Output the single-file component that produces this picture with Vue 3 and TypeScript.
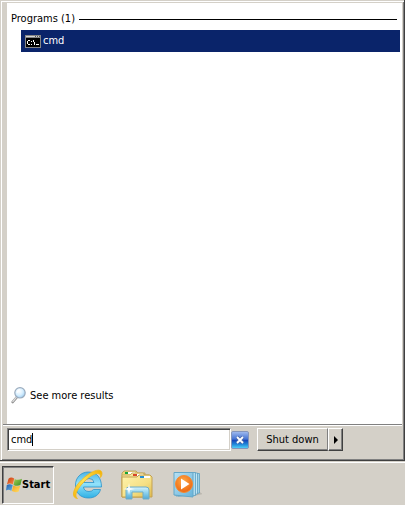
<script setup lang="ts">
import { ref } from 'vue'

interface Program {
  id: number
  name: string
}

const query = ref('cmd')
const programs = ref<Program[]>([{ id: 1, name: 'cmd' }])
const menuOpen = ref(true)

function clearQuery(): void {
  query.value = ''
}
</script>

<template>
  <div class="desktop">
    <main v-show="menuOpen" class="menu">
      <section class="results">
        <div class="heading">
          <h2>Programs ({{ programs.length }})</h2>
          <span class="rule"></span>
        </div>
        <ul class="list">
          <li v-for="program in programs" :key="program.id">
            <a class="program" href="#">
              <svg width="16" height="13" viewBox="0 0 16 13" shape-rendering="crispEdges" aria-hidden="true">
                <rect width="16" height="13" fill="#858585" />
                <rect x="1" y="1" width="14" height="1" fill="#d6d6d6" />
                <path d="M10 1h1v1h-1zM12 1h1v1h-1zM14 1h1v1h-1z" fill="#555" />
                <rect x="1" y="3" width="14" height="9" fill="#000" />
                <path d="M3 5h2v1H3zM2 6h1v3H2zM3 9h2v1H3zM6 6h1v1H6zM6 9h1v1H6zM8 5h1v2H8zM9 7h1v3H9zM11 9h3v1h-3z" fill="#fff" />
              </svg>
              <span>{{ program.name }}</span>
            </a>
          </li>
        </ul>
        <a class="more" href="#">
          <svg width="16" height="18" viewBox="0 0 16 18" aria-hidden="true">
            <defs>
              <radialGradient id="lens" cx=".4" cy=".35" r=".75">
                <stop offset="0" stop-color="#fff" />
                <stop offset=".5" stop-color="#d7efff" />
                <stop offset="1" stop-color="#8fc4ec" />
              </radialGradient>
            </defs>
            <path d="M6 10L1.700 15" stroke="#8c8c8c" stroke-width="2.600" stroke-linecap="round" />
            <path d="M5.700 10L1.800 14.500" stroke="#ddd" stroke-width="1.200" stroke-linecap="round" />
            <circle cx="9" cy="5.800" r="5.200" fill="url(#lens)" stroke="#9babbd" stroke-width="1.200" />
            <path d="M6 6Q6 3 9 2.500" fill="none" stroke="#fff" />
          </svg>
          <span>See more results</span>
        </a>
      </section>

      <form class="searchbar" @submit.prevent>
        <div class="field">
          <input v-model="query" type="text" aria-label="Search" autocomplete="off" spellcheck="false" />
          <span class="caret"></span>
        </div>
        <button class="clear" type="button" aria-label="Clear" @click="clearQuery">
          <svg width="18" height="18" viewBox="0 0 18 18" aria-hidden="true">
            <defs>
              <linearGradient id="blue" x2="0" y2="1">
                <stop offset="0" stop-color="#a3bdf0" />
                <stop offset=".45" stop-color="#4472d2" />
                <stop offset=".52" stop-color="#1745b7" />
                <stop offset=".75" stop-color="#2087d9" />
                <stop offset="1" stop-color="#55d6fa" />
              </linearGradient>
            </defs>
            <rect x=".5" y=".5" width="17" height="17" rx="1.500" fill="url(#blue)" stroke="#8495bb" />
            <path d="M6 6L12 12M12 6L6 12" stroke="#4a69ab" stroke-width="3.600" />
            <path d="M6 6L12 12M12 6L6 12" stroke="#fff" stroke-width="1.800" />
          </svg>
        </button>
        <div class="power">
          <button class="shutdown" type="button">Shut down</button>
          <button class="arrow" type="button" aria-label="More options">
            <svg width="4" height="8" viewBox="0 0 4 8" aria-hidden="true"><path d="M0 0L4 4L0 8z" /></svg>
          </button>
        </div>
      </form>
    </main>

    <nav class="taskbar">
      <button class="start" type="button" @click="menuOpen = !menuOpen">
        <svg width="16" height="16" viewBox="0 0 16 16" aria-hidden="true">
          <defs>
            <linearGradient id="flagRed" x2="1" y2="1"><stop stop-color="#c9390f" /><stop offset="1" stop-color="#f88d48" /></linearGradient>
            <linearGradient id="flagGreen" x2="1" y2="1"><stop stop-color="#a6d253" /><stop offset="1" stop-color="#358b23" /></linearGradient>
            <linearGradient id="flagBlue" x2="1" y2="1"><stop stop-color="#2159a8" /><stop offset="1" stop-color="#65b8eb" /></linearGradient>
            <linearGradient id="flagGold" x2="1" y2="1"><stop stop-color="#f2a019" /><stop offset="1" stop-color="#ffe06b" /></linearGradient>
          </defs>
          <path d="M2.500 1.800Q5-.5 8.200 1.600L6.900 7.500Q4 5.800 1 7.300z" fill="url(#flagRed)" />
          <path d="M8.700 2Q12 3.800 16 1.800L14.400 8Q11 9.700 7.500 7.900z" fill="url(#flagGreen)" />
          <path d="M.8 8Q4 6.500 6.700 8.200L5.400 13.900Q2.500 12 0 13.500z" fill="url(#flagBlue)" />
          <path d="M7.300 8.600Q10.500 10.300 14.200 8.700L12.700 14.400Q9.500 16 5.900 14.100z" fill="url(#flagGold)" />
        </svg>
        <span>Start</span>
      </button>

      <button class="launch" type="button" aria-label="Internet Explorer">
        <svg width="32" height="32" viewBox="0 0 32 32" aria-hidden="true">
          <defs>
            <linearGradient id="eBlue" x2="0" y2="1">
              <stop offset="0" stop-color="#4db4e4" />
              <stop offset=".45" stop-color="#93e2fb" />
              <stop offset="1" stop-color="#2fb0e4" />
            </linearGradient>
            <linearGradient id="ring" x1="0" y1="1" x2="1" y2="0">
              <stop offset="0" stop-color="#f7b60b" />
              <stop offset=".5" stop-color="#ffe352" />
              <stop offset="1" stop-color="#f4b000" />
            </linearGradient>
          </defs>
          <path d="M16.500 3C25 3 29.500 9 29.500 18H11.500Q12 22.500 17 22.500Q20 22.500 21.500 20.500H28.500C27 26 22.500 29 16.500 29C8.500 29 3.500 24 3.500 16C3.500 9 8.500 3 16.500 3zM11.500 13.500H22Q21.500 9.500 17 9.500Q12.500 9.500 11.500 13.500z" fill="url(#eBlue)" fill-rule="evenodd" stroke="#2b92c9" stroke-width=".8" />
          <path d="M5.500 29.500C-1.500 29 1 19 9.500 11C18 2.500 27-1 29.500 2.500C30.500 4.500 30 6.500 28.500 8.500C29 6 28 4.500 25.500 4.500C20 5 13 11 8 17.500C4 23 2.500 27 5.500 29.500z" fill="url(#ring)" stroke="#f0b81e" stroke-width=".8" />
        </svg>
      </button>

      <button class="launch" type="button" aria-label="Windows Explorer">
        <svg width="34" height="32" viewBox="0 0 34 32" aria-hidden="true">
          <defs>
            <linearGradient id="folder" x2="1" y2="1">
              <stop offset="0" stop-color="#fff4ae" />
              <stop offset=".6" stop-color="#f5df83" />
              <stop offset="1" stop-color="#dfb94c" />
            </linearGradient>
            <linearGradient id="stand" x2="0" y2="1">
              <stop offset="0" stop-color="#d5f3fc" />
              <stop offset=".5" stop-color="#8bd0ec" />
              <stop offset="1" stop-color="#51a9d5" />
            </linearGradient>
          </defs>
          <path d="M2 28V4L4 2H16L18 4H25V28z" fill="#efd879" stroke="#bda363" />
          <rect x="5" y="3" width="10" height="2" fill="#fff" /><rect x="5" y="3" width="3" height="2" fill="#16a33b" />
          <path d="M2 28V6H10L12 4H23L25 6H29V28z" fill="#f7e697" stroke="#c7ad67" />
          <rect x="13" y="5" width="10" height="2" fill="#fff" /><rect x="13" y="5" width="4" height="2" fill="#d84727" />
          <path d="M2 28V8H17L19 6H30L32 8V28z" fill="url(#folder)" stroke="#c3a153" />
          <rect x="20" y="7" width="10" height="2" fill="#fff" /><rect x="20" y="7" width="4" height="2" fill="#258fd2" />
          <path d="M6 30V21Q6 18 9 18H26Q29 18 29 21V30H23V23H12V30z" fill="url(#stand)" stroke="#6eacc7" />
          <path d="M9 14L10 19L15 20L10 21L9 26L8 21L3 20L8 19z" fill="#fff" opacity=".9" />
        </svg>
      </button>

      <button class="launch" type="button" aria-label="Windows Media Player">
        <svg width="32" height="30" viewBox="0 0 32 30" aria-hidden="true">
          <defs>
            <linearGradient id="sheet" x2="1" y2="1">
              <stop offset="0" stop-color="#b9e1f3" />
              <stop offset="1" stop-color="#67b3da" />
            </linearGradient>
            <radialGradient id="disc" cx=".45" cy=".35" r=".65">
              <stop offset="0" stop-color="#ffad49" />
              <stop offset="1" stop-color="#ed6510" />
            </radialGradient>
          </defs>
          <path d="M24 26L33 24L28 21z" fill="#aaa79f" opacity=".6" />
          <path d="M12 3.500H29.500V23L12 25z" fill="#9ed1e8" stroke="#5c9fc0" stroke-width=".8" />
          <path d="M8 3H27.500V24L8 26z" fill="#c2e6f5" stroke="#5c9fc0" stroke-width=".8" />
          <path d="M6 2.500H25.500V25.500L6 26z" fill="#b0dcf0" stroke="#5c9fc0" stroke-width=".8" />
          <path d="M4 2.500H23V27L4 25z" fill="url(#sheet)" stroke="#64a7c8" />
          <circle cx="14" cy="14" r="8.500" fill="url(#disc)" stroke="#f58a31" />
          <path d="M11 8.500L19.500 14L11 19.500z" fill="#fff" />
        </svg>
      </button>
    </nav>
  </div>
</template>

<style>
body {
  margin: 0;
  background: #d4d0c8;
}
</style>

<style scoped>
* {
  box-sizing: border-box;
}

.desktop {
  display: flex;
  flex-direction: column;
  min-height: 100vh;
  background: #d4d0c8;
  color: #000;
  font-family: "DejaVu Sans Condensed", "DejaVu Sans", sans-serif;
  font-size: 11px;
  line-height: 14px;
}

svg {
  display: block;
  flex: none;
}

button {
  padding: 0;
  border: 0;
  background: transparent;
  color: inherit;
  font: inherit;
}

a {
  color: inherit;
  text-decoration: none;
}

.menu {
  display: flex;
  flex: 1;
  flex-direction: column;
  padding: 1px 1px 0 2px;
  border-right: 1px solid #404040;
  border-bottom: 1px solid #404040;
  box-shadow: inset 1px 0 #d4d0c8, inset 0 1px #d4d0c8, inset 2px 0 #fff, inset 0 2px #fff, inset -1px -1px #808080;
}

.results {
  display: flex;
  flex: 1;
  flex-direction: column;
  margin: 2px 1px 0 5px;
  padding: 9px 2px 19px 4px;
  background: #fff;
}

.heading {
  display: flex;
  align-items: center;
  gap: 4px;
  padding-right: 3px;
}

h2 {
  margin: 0;
  font-size: 11px;
  font-weight: 400;
}

.rule {
  flex: 1;
  height: 1px;
  background: #000;
}

.list {
  margin: 4px 0 0 10px;
  padding: 0;
  list-style: none;
}

.program {
  display: flex;
  align-items: center;
  gap: 2px;
  height: 22px;
  padding-left: 4px;
  background: #0a246a;
  color: #fff;
}

.more {
  display: flex;
  align-items: center;
  gap: 3px;
  margin-top: auto;
}

.searchbar {
  display: flex;
  align-items: center;
  margin: 0 1px 1px;
  padding: 3px 4px 8px;
  border-top: 1px solid #808080;
  box-shadow: inset 0 1px #fff;
}

.field {
  position: relative;
  flex: 0 1 224px;
}

input {
  display: block;
  width: 100%;
  height: 23px;
  padding: 0 3px;
  border: 1px solid;
  border-color: #808080 #fff #fff #808080;
  border-radius: 0;
  outline: 0;
  background: #fff;
  box-shadow: inset 1px 1px #404040, inset -1px -1px #d4d0c8;
  color: #000;
  font: inherit;
}

.caret {
  position: absolute;
  top: 5px;
  left: 25px;
  width: 1px;
  height: 13px;
  background: #000;
}

.power {
  display: flex;
  margin-left: 8px;
}

.shutdown,
.arrow {
  height: 23px;
  border: 1px solid;
  border-color: #fff #404040 #404040 #fff;
  box-shadow: inset -1px -1px #808080;
}

.shutdown {
  width: 71px;
  border-right-color: #808080;
  box-shadow: inset 0 -1px #808080;
}

.arrow {
  display: flex;
  align-items: center;
  justify-content: center;
  width: 15px;
}

.taskbar {
  display: flex;
  align-items: center;
  height: 44px;
  padding: 2px 2px 0;
  border-top: 1px solid #d4d0c8;
  box-shadow: inset 0 1px #fff;
}

.start {
  display: flex;
  align-items: center;
  width: 52px;
  height: 38px;
  padding-left: 3px;
  border: 1px solid;
  border-color: #404040 #fff #fff #404040;
  box-shadow: inset 1px 1px #808080;
  font-weight: 700;
}

.launch {
  display: flex;
  align-items: center;
  justify-content: center;
  width: 49px;
  height: 38px;
}

.start + .launch {
  margin-left: 9px;
}
</style>
